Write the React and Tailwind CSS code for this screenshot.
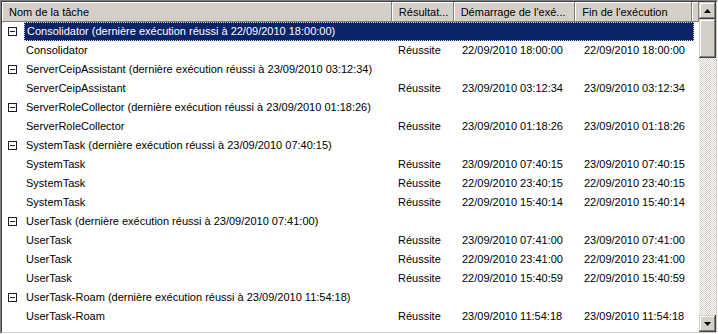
import React from "react";

const groups = [
  {
    name: "Consolidator",
    last: "22/09/2010 18:00:00",
    runs: [["22/09/2010 18:00:00", "22/09/2010 18:00:00"]],
  },
  {
    name: "ServerCeipAssistant",
    last: "23/09/2010 03:12:34",
    runs: [["23/09/2010 03:12:34", "23/09/2010 03:12:34"]],
  },
  {
    name: "ServerRoleCollector",
    last: "23/09/2010 01:18:26",
    runs: [["23/09/2010 01:18:26", "23/09/2010 01:18:26"]],
  },
  {
    name: "SystemTask",
    last: "23/09/2010 07:40:15",
    runs: [
      ["23/09/2010 07:40:15", "23/09/2010 07:40:15"],
      ["22/09/2010 23:40:15", "22/09/2010 23:40:15"],
      ["22/09/2010 15:40:14", "22/09/2010 15:40:14"],
    ],
  },
  {
    name: "UserTask",
    last: "23/09/2010 07:41:00",
    runs: [
      ["23/09/2010 07:41:00", "23/09/2010 07:41:00"],
      ["22/09/2010 23:41:00", "22/09/2010 23:41:00"],
      ["22/09/2010 15:40:59", "22/09/2010 15:40:59"],
    ],
  },
  {
    name: "UserTask-Roam",
    last: "23/09/2010 11:54:18",
    runs: [["23/09/2010 11:54:18", "23/09/2010 11:54:18"]],
  },
];

const bevel =
  "bg-[#d4d0c8] shadow-[inset_-1px_-1px_#404040,inset_1px_1px_#d4d0c8,inset_-2px_-2px_#808080,inset_2px_2px_#fff]";

function HeaderCell({ children, className = "" }) {
  return (
    <div className={`h-full flex items-center pl-[7px] truncate shadow-[inset_-1px_-1px_#808080,inset_1px_1px_#fff] ${className}`}>
      {children}
    </div>
  );
}

function Minus() {
  return (
    <span className="w-[9px] h-[9px] border border-[#1a1a2e] bg-white flex items-center justify-center shrink-0">
      <span className="w-[5px] h-px bg-[#1a1a2e]" />
    </span>
  );
}

function Arrow({ up }) {
  return (
    <svg width="7" height="4" viewBox="0 0 7 4">
      <path d={up ? "M3.5 0L7 4H0Z" : "M0 0H7L3.5 4Z"} fill="#000" />
    </svg>
  );
}

export default function App() {
  return (
    <div className="w-[718px] h-[334px] border border-t-[#808080] border-l-[#808080] border-b-white border-r-white font-['Liberation_Sans',Arial,sans-serif] text-[11px] text-black">
      <div className="w-full h-full border border-t-[#404040] border-l-[#404040] border-b-[#d4d0c8] border-r-[#d4d0c8] flex bg-white">
        <div className="flex-1 flex flex-col overflow-hidden">
          <div className="h-[20px] shrink-0 flex bg-[#d4d0c8]">
            <HeaderCell className="w-[391px]">Nom de la tâche</HeaderCell>
            <HeaderCell className="w-[62px] pl-[6px]">Résultat...</HeaderCell>
            <HeaderCell className="w-[122px]">Démarrage de l'exé...</HeaderCell>
            <HeaderCell className="w-[117px]">Fin de l'exécution</HeaderCell>
            <HeaderCell className="flex-1" />
          </div>
          {groups.map((g, gi) => (
            <div key={g.name}>
              <div className="h-[19px] flex items-center pl-[6px]">
                <Minus />
                <span
                  className={`ml-[7px] h-[19px] flex items-center pl-[2px] w-[670px] ${
                    gi === 0 ? "bg-[#0a246a] text-white border border-dotted border-[#d8d8c0] pl-[1px]" : ""
                  }`}
                >
                  {g.name} (dernière exécution réussi à {g.last})
                </span>
              </div>
              {g.runs.map((r, ri) => (
                <div key={ri} className="h-[19px] flex items-center">
                  <span className="w-[391px] pl-[24px]">{g.name}</span>
                  <span className="w-[62px] pl-[5px]">Réussite</span>
                  <span className="w-[122px] pl-[7px]">{r[0]}</span>
                  <span className="w-[117px] pl-[7px]">{r[1]}</span>
                </div>
              ))}
            </div>
          ))}
        </div>
        <div className="w-[17px] flex flex-col bg-[image:repeating-conic-gradient(#d4d0c8_0%_25%,#fff_0%_50%)] bg-[length:2px_2px]">
          <div className={`h-[17px] flex items-center justify-center ${bevel}`}>
            <Arrow up />
          </div>
          <div className={`h-[39px] ${bevel}`} />
          <div className="flex-1" />
          <div className={`h-[17px] flex items-center justify-center ${bevel}`}>
            <Arrow />
          </div>
        </div>
      </div>
    </div>
  );
}
